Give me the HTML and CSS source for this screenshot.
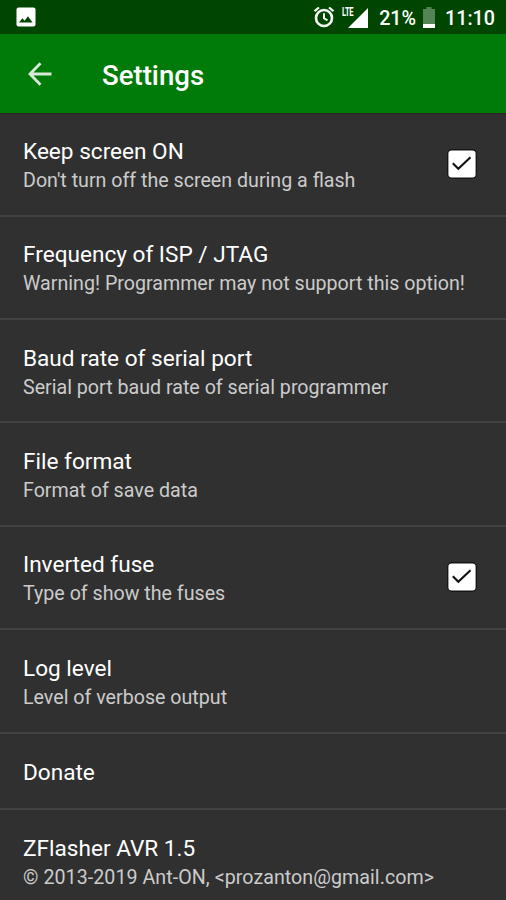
FILE: index.html
```html
<!DOCTYPE html>
<html lang="en">
<head>
<meta charset="utf-8">
<title>Settings</title>
<link rel="stylesheet" href="styles.css">
</head>
<body>
<div class="status">
  <svg class="picture" viewBox="0 0 20 20"><rect x=".5" y=".5" width="19" height="19" rx="2" fill="#fff"/><path d="M3 15.500l3.400-4.300 2.200 2.600 3.300-4.600 4.700 6.300z" fill="#004600"/></svg>
  <svg class="alarm" viewBox="0 0 22 22"><g fill="none" stroke="#f4faf4"><circle cx="11" cy="12" r="8" stroke-width="2.600"/><path d="M11 7.300v5l3.500 2.100" stroke-width="2"/><path d="M1.500 5.200L6 1.500M20.500 5.200L16 1.500" stroke-width="2.200"/></g></svg>
  <div class="signal"><svg viewBox="0 0 20 20"><path d="M20 0v20H0z" fill="#fff"/></svg><span class="lte">LTE</span></div>
  <span class="percent">21%</span>
  <svg class="battery" viewBox="0 0 12 21"><path d="M3.500 0h5v2H12v19H0V2h3.500z" fill="#548454"/><path d="M0 17h12v4H0z" fill="#fff"/></svg>
  <span class="clock">11:10</span>
</div>
<header class="bar">
  <svg class="back" viewBox="0 0 24 24"><path d="M23.500 12H2M12.500 1.200L2 12l10.500 10.800" fill="none" stroke="#d9e8d9" stroke-width="2.800"/></svg>
  <h1>Settings</h1>
</header>
<main>
  <section class="row"><div><h2>Keep screen ON</h2><p>Don't turn off the screen during a flash</p></div><svg class="check" viewBox="0 0 30 30"><rect x=".7" y=".7" width="28.600" height="28.600" rx="4" fill="#fff" stroke="#161616" stroke-width="1.400"/><path d="M5.800 14.200l5.500 5.600L23.500 8.200" fill="none" stroke="#111" stroke-width="2.100"/></svg></section>
  <section class="row"><div><h2>Frequency of ISP / JTAG</h2><p>Warning! Programmer may not support this option!</p></div></section>
  <section class="row"><div><h2>Baud rate of serial port</h2><p>Serial port baud rate of serial programmer</p></div></section>
  <section class="row"><div><h2>File format</h2><p>Format of save data</p></div></section>
  <section class="row"><div><h2>Inverted fuse</h2><p>Type of show the fuses</p></div><svg class="check" viewBox="0 0 30 30"><rect x=".7" y=".7" width="28.600" height="28.600" rx="4" fill="#fff" stroke="#161616" stroke-width="1.400"/><path d="M5.800 14.200l5.500 5.600L23.500 8.200" fill="none" stroke="#111" stroke-width="2.100"/></svg></section>
  <section class="row"><div><h2>Log level</h2><p>Level of verbose output</p></div></section>
  <section class="row short"><div><h2>Donate</h2></div></section>
  <section class="row last"><div><h2>ZFlasher AVR 1.5</h2><p>© 2013-2019 Ant-ON, &lt;prozanton@gmail.com&gt;</p></div></section>
</main>
</body>
</html>
```
FILE: styles.css
```css
* { box-sizing: border-box; }
body {
  margin: 0;
  height: 900px;
  overflow: hidden;
  background: #303030;
  color: #fff;
  font-family: Roboto, "Liberation Sans", sans-serif;
}
h1, h2, p { margin: 0; white-space: nowrap; }
svg { display: block; flex: none; }
.status {
  height: 34px;
  padding: 0 11px 0 16px;
  display: flex;
  align-items: center;
  background: #004600;
  font-size: 19.7px;
  font-weight: 500;
  line-height: 34px;
}
.status span { padding-top: 3px; }
.picture { width: 20px; height: 20px; }
.alarm { width: 22px; height: 22px; margin-left: auto; }
.signal { position: relative; width: 27px; height: 20px; margin: 2px 0 0 7px; }
.signal svg { width: 20px; height: 20px; margin-left: 6px; }
.status .lte {
  position: absolute;
  left: 0;
  top: -3px;
  padding: 0;
  font-size: 13px;
  line-height: 13px;
  font-weight: 700;
  letter-spacing: -.5px;
  transform: scaleX(.58);
  transform-origin: left;
}
.percent { margin-left: 10px; }
.battery { width: 12px; height: 21px; margin-left: 7px; }
.clock { margin-left: 10px; }
.bar {
  height: 79px;
  padding-left: 28px;
  display: flex;
  align-items: center;
  background: #007a08;
}
.back { width: 24px; height: 24px; }
h1 {
  margin-left: 50px;
  padding-top: 4px;
  font-size: 27.6px;
  line-height: 34px;
  font-weight: 500;
}
main { border-top: 1px solid #222; }
.row {
  height: 103.4px;
  padding: 0 29px 0 23px;
  display: flex;
  align-items: center;
  justify-content: space-between;
  border-bottom: 2px solid #424242;
}
.row:first-child { height: 102.6px; }
.row > div { padding-top: 4px; }
h2 { font-size: 22.6px; line-height: 29px; font-weight: 400; }
p { font-size: 19.65px; line-height: 29px; color: #cbcbcb; }
.check { width: 30px; height: 30px; }
.short { height: 76px; }
.last { border: 0; height: 103px; }
.last p { letter-spacing: .05px; }
```
